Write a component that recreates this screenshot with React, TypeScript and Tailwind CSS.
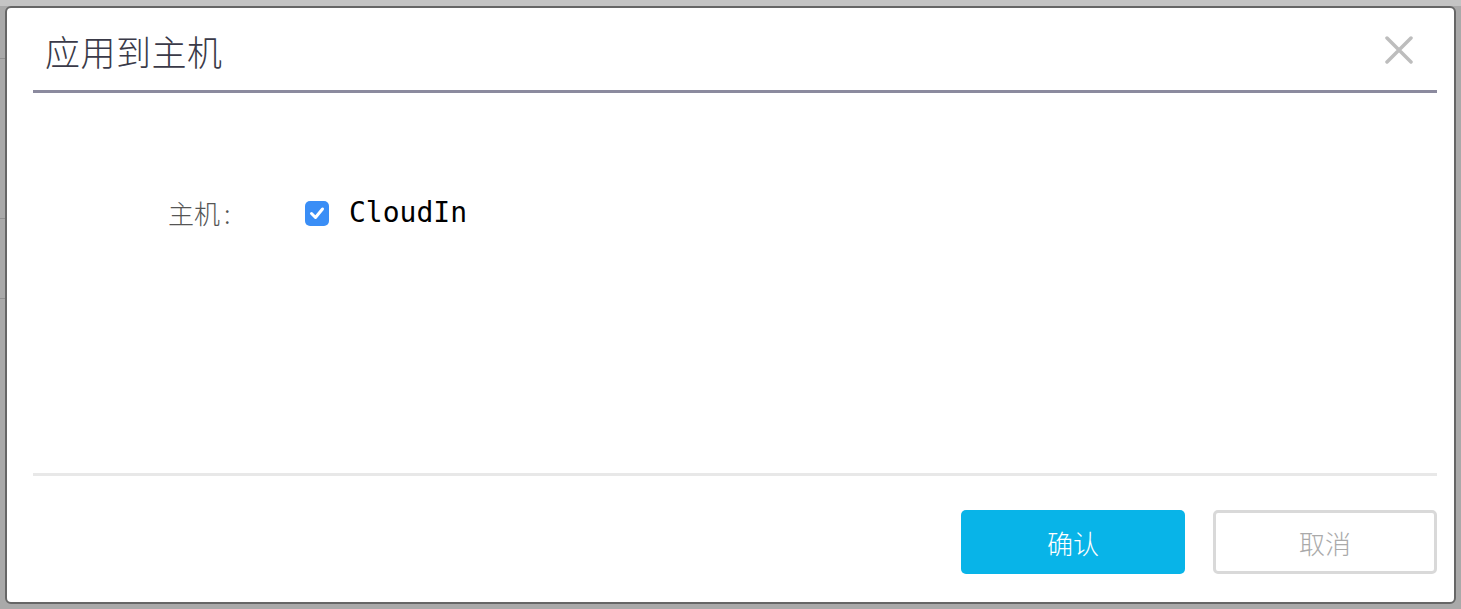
export default function App() {
  return (
    <div className="relative w-[1461px] h-[609px] bg-[#a9a9a9] overflow-hidden pl-[5px] pt-[6px] font-['Noto_Sans_CJK_SC','Noto_Sans',sans-serif]">
      {/* faint page behind the overlay */}
      <div className="absolute inset-x-0 top-0 h-[6px] bg-[#c4c4c4]" />
      <div className="absolute left-0 top-[58px] w-[5px] h-px bg-[#8f8f8f]" />
      <div className="absolute left-0 top-[218px] w-[5px] h-px bg-[#8f8f8f]" />
      <div className="absolute left-0 top-[298px] w-[5px] h-px bg-[#8f8f8f]" />

      {/* dialog */}
      <div className="relative w-[1451px] h-[598px] bg-white border-2 border-[#666] rounded-[6px] flex flex-col">
        {/* header */}
        <div className="ml-[26px] mr-[17px] h-[85px] border-b-[3px] border-[#8b8a9e] flex items-center justify-between pt-[2px]">
          <h1 className="pl-[12px] text-[35px] font-light text-[#3a3a48] leading-none tracking-[0.5px]">应用到主机</h1>
          <button className="mr-[23px] w-[30px] h-[30px] flex items-center justify-center">
            <svg width="28" height="28" viewBox="0 0 28 28">
              <path d="M2 2 L26 26 M26 2 L2 26" stroke="#bdbdbd" strokeWidth="3.5" strokeLinecap="round" />
            </svg>
          </button>
        </div>

        {/* body */}
        <div className="ml-[26px] mr-[17px] flex-1 border-b-[3px] border-[#e8e8e8] pt-[106px]">
          <div className="flex items-center h-[28px]">
            <span className="ml-[135px] w-[137px] text-[26px] font-light text-[#555] leading-none">主机<span className="ml-[4px]">:</span></span>
            <span className="w-[24px] h-[25px] rounded-[5px] bg-[#3a8ef6] flex items-center justify-center">
              <svg width="24" height="24" viewBox="0 0 24 24">
                <path d="M6.5 12.5 L10.5 16.5 L17.5 8" stroke="white" strokeWidth="3" fill="none" strokeLinecap="round" strokeLinejoin="round" />
              </svg>
            </span>
            <span className="ml-[20px] text-[28px] text-black leading-none font-['DejaVu_Sans_Mono',monospace]">CloudIn</span>
          </div>
        </div>

        {/* footer */}
        <div className="ml-[26px] mr-[17px] h-[126px] pt-[34px] flex justify-end gap-[28px]">
          <button className="w-[224px] h-[64px] rounded-[5px] bg-[#08b4e8] text-white text-[26px] font-light">确认</button>
          <button className="w-[224px] h-[64px] rounded-[5px] border-[3px] border-[#d9d9d9] text-[#aaa] text-[26px] font-light">取消</button>
        </div>
      </div>
    </div>
  );
}
